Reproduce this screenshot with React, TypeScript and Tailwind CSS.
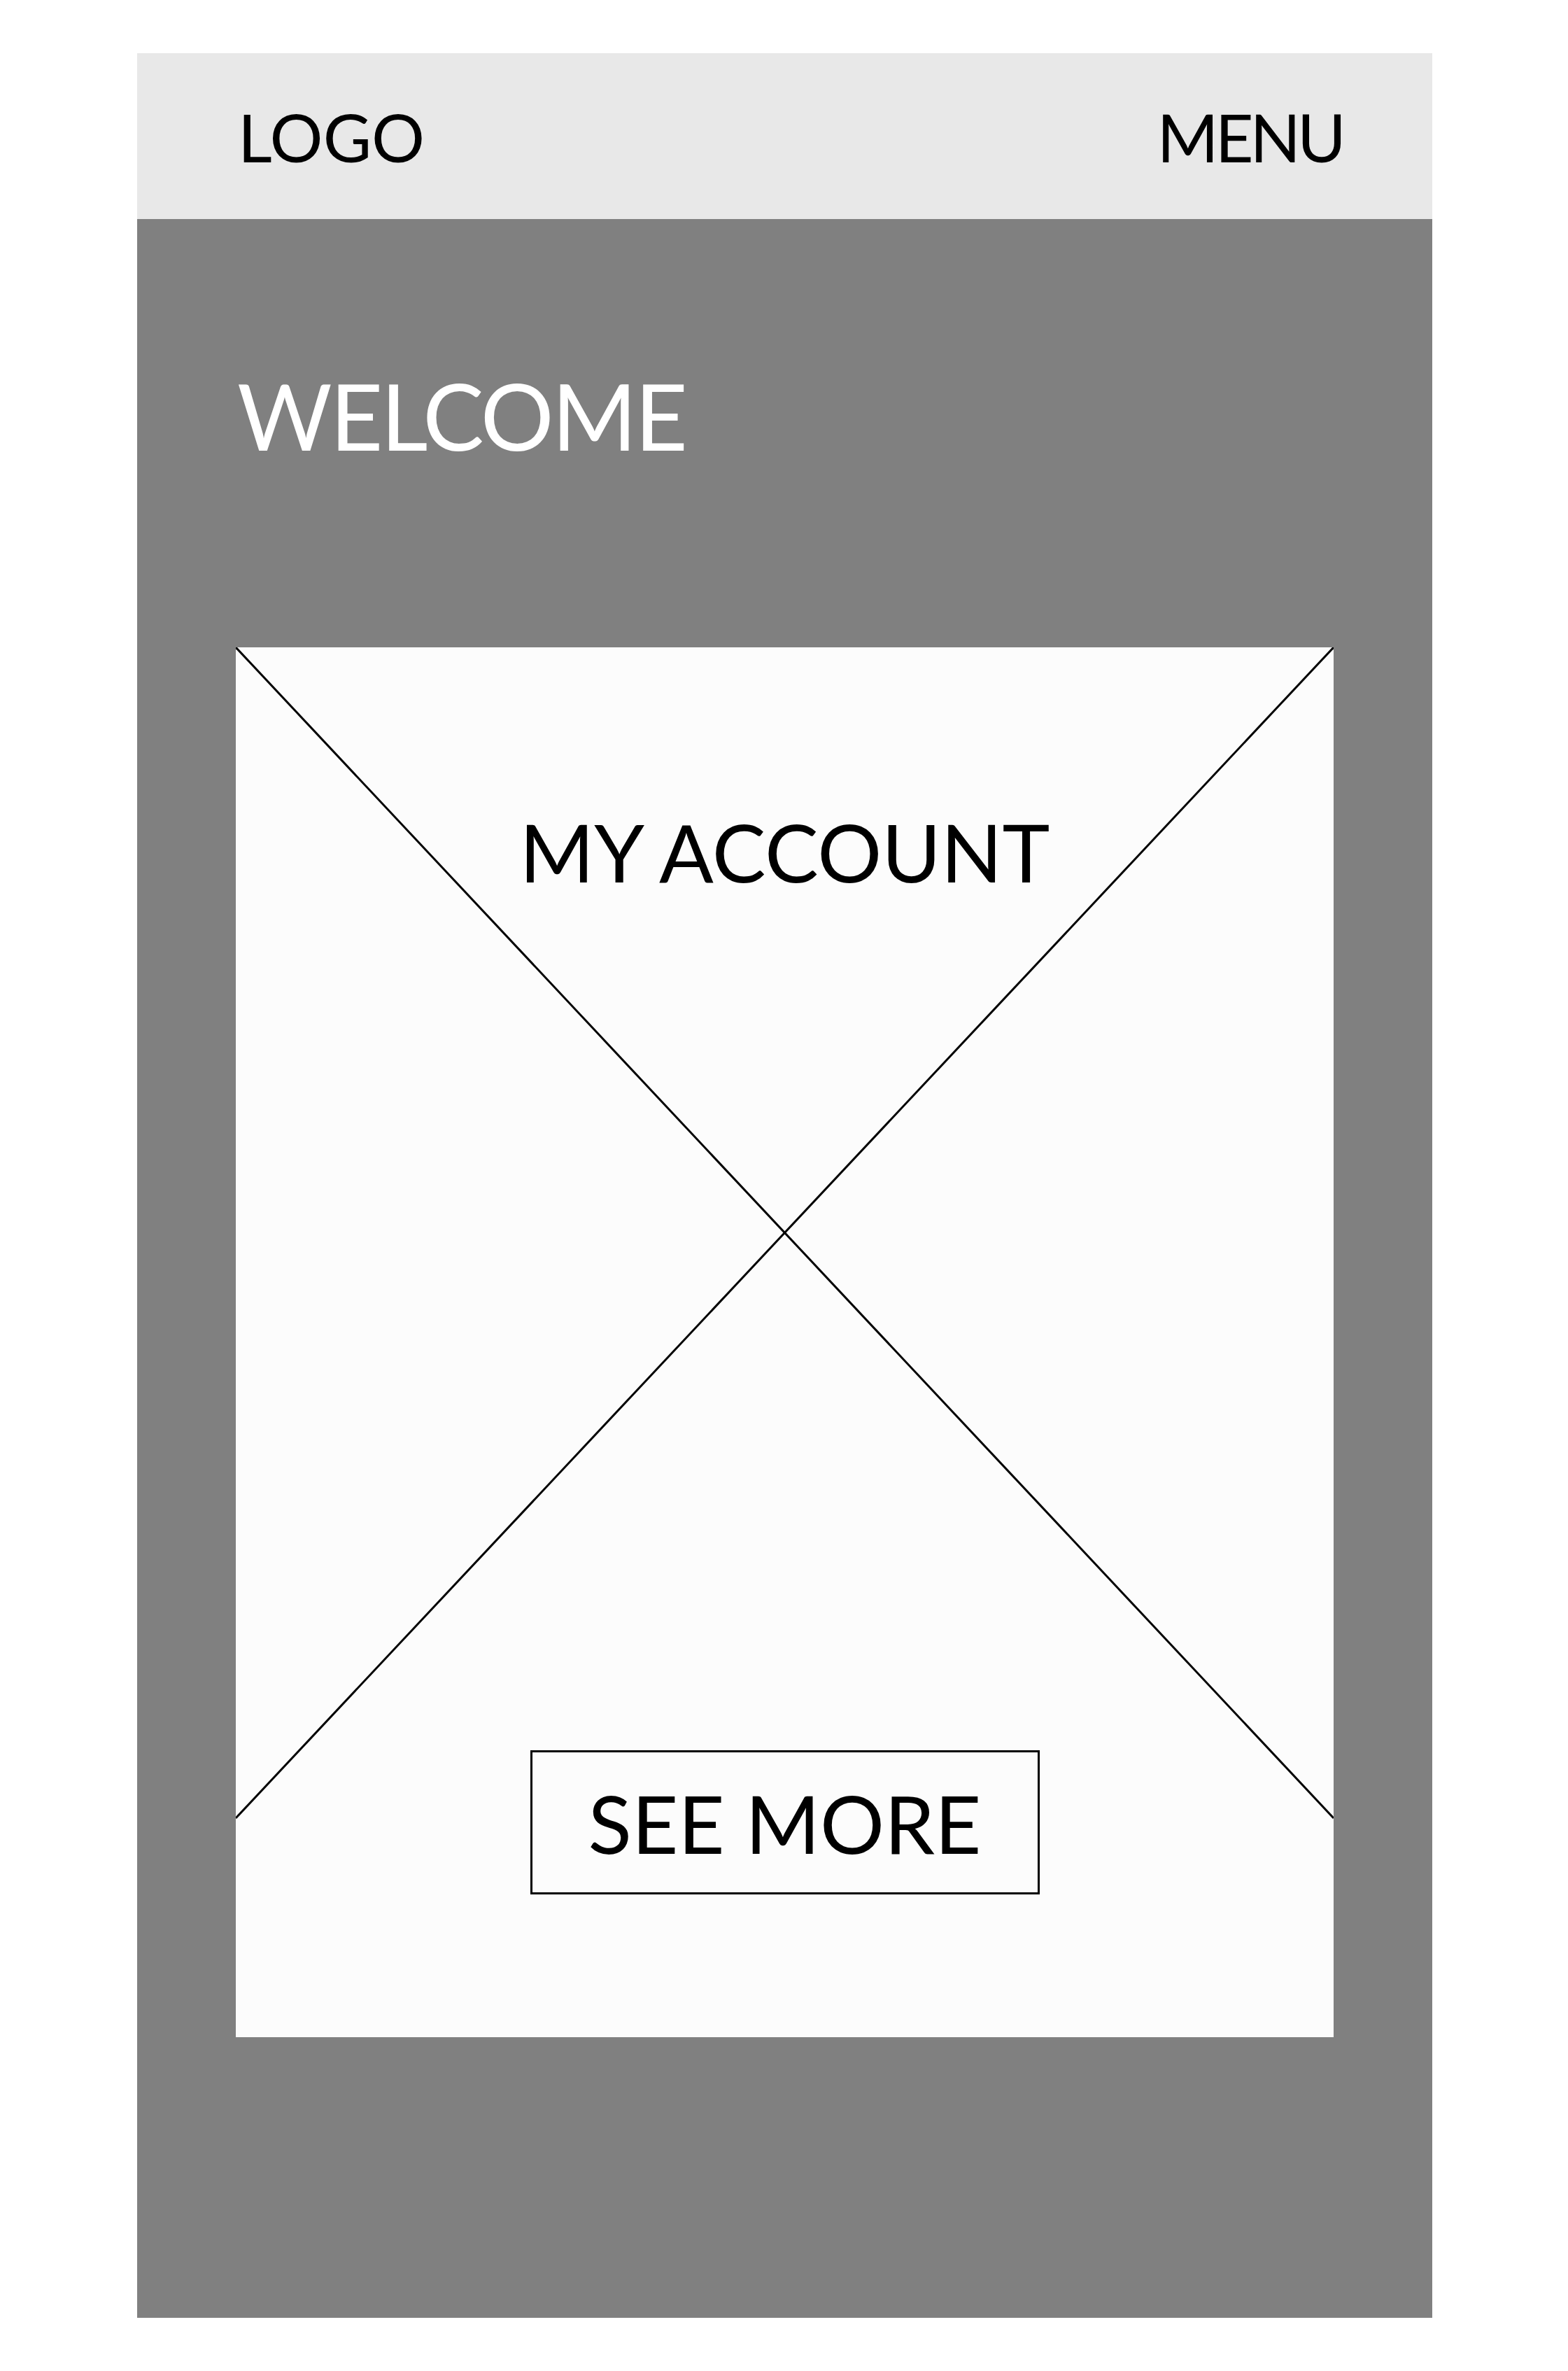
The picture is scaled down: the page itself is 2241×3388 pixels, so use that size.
export default function App() {
  return (
    <div className="min-h-[3388px] w-full bg-white pt-[76px] pl-[196px]" style={{ fontFamily: 'Lato, "Open Sans", sans-serif' }}>
      <div className="flex h-[3236px] w-[1851px] flex-col bg-[#808080]">
        {/* top bar */}
        <header className="flex h-[237px] items-center justify-between bg-[#e8e8e8] pl-[144px] pr-[128px] pt-[2px]">
          <span className="text-[95px] leading-none text-black">LOGO</span>
          <span className="text-[95px] leading-none tracking-[-5px] text-black">MENU</span>
        </header>

        <div className="flex flex-col px-[141px]">
          <h1 className="pt-[215px] pl-[2px] text-[131px] font-normal leading-none tracking-[-3px] text-white">WELCOME</h1>

          <div className="relative mt-[266px] flex h-[1986px] flex-col items-center bg-[#fcfcfc]">
            <svg
              className="pointer-events-none absolute left-0 top-0"
              width="1569"
              height="1986"
              viewBox="0 0 1569 1986"
            >
              <line x1="0" y1="0" x2="1569" y2="1673" stroke="#000" strokeWidth="3" />
              <line x1="1569" y1="0" x2="0" y2="1673" stroke="#000" strokeWidth="3" />
            </svg>

            <h2 className="relative mt-[234px] text-[115px] font-normal leading-none text-black">MY ACCOUNT</h2>

            <button className="relative mt-[1227px] flex h-[206px] w-[728px] items-center justify-center border-[3px] border-black bg-transparent text-[115px] leading-none text-black">
              SEE MORE
            </button>
          </div>
        </div>
      </div>
    </div>
  )
}
